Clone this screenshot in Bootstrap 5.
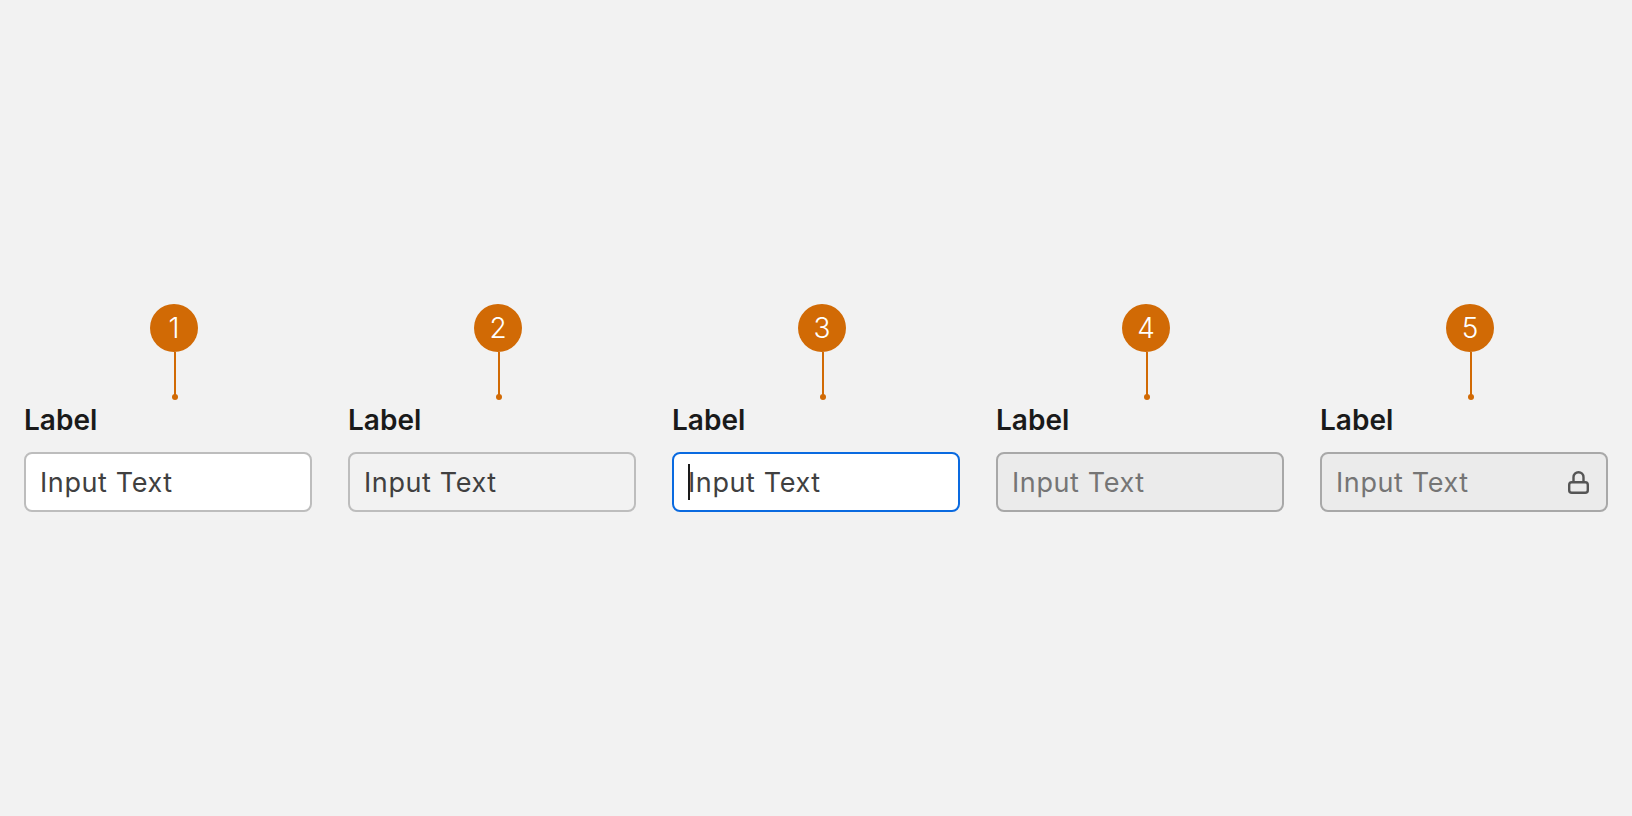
<!DOCTYPE html>
<html lang="en"><head><meta charset="utf-8">
<link href="https://cdn.jsdelivr.net/npm/bootstrap@5.3.0/dist/css/bootstrap.min.css" rel="stylesheet">
<script src="https://cdn.jsdelivr.net/npm/bootstrap@5.3.0/dist/js/bootstrap.bundle.min.js"></script>
<style>
body{background:#f2f2f2;font-family:Inter,"Liberation Sans",sans-serif;overflow:hidden;}
.stage{height:816px;padding:304px 24px 0;gap:36px;}
.field{width:288px;}
.pin-wrap{height:96px;margin-left:126px;width:48px;}
.pin{width:48px;height:48px;border-radius:50%;background:#d16a05;color:#fff;font-size:28px;line-height:48px;text-align:center;font-weight:300;}
.pin-line{width:2px;height:43px;background:#d16a05;margin-left:24px;}
.pin-dot{width:6px;height:6px;border-radius:50%;background:#d16a05;margin-left:22px;margin-top:-1px;}
.lbl{display:block;font-size:28px;font-weight:600;line-height:40px;color:#1a1a1a;margin:0 0 12px;}
.box{height:60px;border:2px solid #bdbdbd;border-radius:8px;padding:2px 14px 0;font-size:27px;letter-spacing:.6px;color:#404040;background:#fff;}
.box.hov{background:#f2f2f2;}
.box.foc{border-color:#0a6ae0;}
.box.dis{background:#ebebeb;border-color:#a8a8a8;color:#757575;}
.caret-bar{width:2px;height:36px;background:#1a1a1a;margin:-2px -2px 0 0;}
.lock{margin:-2px 2px 0 0;}
</style></head><body>
<div class="stage d-flex align-items-start">
<div class="field"><div class="pin-wrap"><div class="pin">1</div><div class="pin-line"></div><div class="pin-dot"></div></div><label class="lbl">Label</label><div class="box d-flex align-items-center">Input Text</div></div>
<div class="field"><div class="pin-wrap"><div class="pin">2</div><div class="pin-line"></div><div class="pin-dot"></div></div><label class="lbl">Label</label><div class="box hov d-flex align-items-center">Input Text</div></div>
<div class="field"><div class="pin-wrap"><div class="pin">3</div><div class="pin-line"></div><div class="pin-dot"></div></div><label class="lbl">Label</label><div class="box foc d-flex align-items-center"><span class="caret-bar"></span>Input Text</div></div>
<div class="field"><div class="pin-wrap"><div class="pin">4</div><div class="pin-line"></div><div class="pin-dot"></div></div><label class="lbl">Label</label><div class="box dis d-flex align-items-center">Input Text</div></div>
<div class="field"><div class="pin-wrap"><div class="pin">5</div><div class="pin-line"></div><div class="pin-dot"></div></div><label class="lbl">Label</label><div class="box dis d-flex align-items-center justify-content-between">Input Text
<svg class="lock" width="24" height="24" viewBox="0 0 24 24" fill="none" stroke="#555" stroke-width="2.4"><rect x="3.2" y="12.2" width="18.6" height="10.6" rx="2.6"/><path d="M7.5 12V7.2a5 5 0 0 1 10 0V12"/></svg></div></div>
</div>
</body></html>
